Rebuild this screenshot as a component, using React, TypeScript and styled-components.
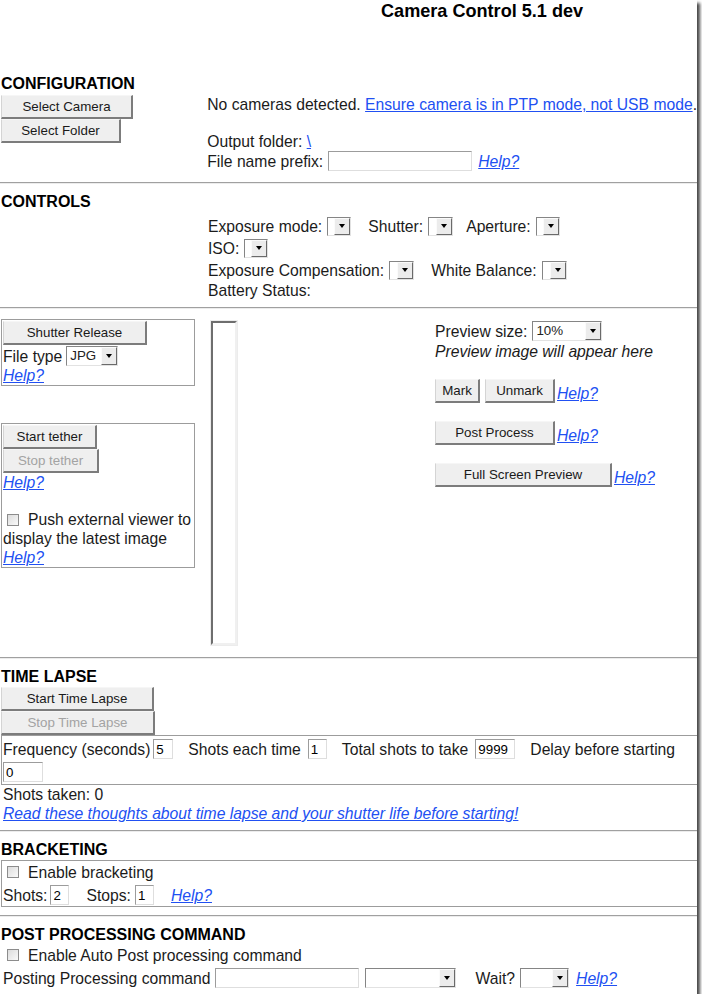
import React from 'react'
import styled, { createGlobalStyle } from 'styled-components'

const GlobalStyle = createGlobalStyle`
  html, body {
    margin: 0;
    padding: 0;
    background: #fff;
  }
  body {
    font-family: "Liberation Sans", Arial, sans-serif;
    font-size: 15.7px;
    line-height: 19px;
    color: #1b1b1b;
  }
`

const Page = styled.div`
  width: 697px;
  height: 994px;
  background: #fff;
  box-shadow: 3px 3px 3px rgba(0, 0, 0, 0.72);
  overflow: hidden;
  display: flex;
  flex-direction: column;
`

const Title = styled.h1`
  margin: 0;
  box-sizing: border-box;
  height: 74px;
  padding: 1px 0 0 381px;
  font-size: 18.1px;
  line-height: 21px;
  font-weight: bold;
  color: #000;
`

const Heading = styled.h2<{ $top?: number }>`
  margin: ${p => p.$top ?? 0}px 0 0 0;
  padding-left: 1px;
  font-size: 16px;
  line-height: 20px;
  font-weight: bold;
  color: #000;
`

const Rule = styled.hr<{ $top: number }>`
  margin: ${p => p.$top}px 0 0 0;
  height: 0;
  border: 0;
  border-top: 1px solid #a0a0a0;
  border-bottom: 1px solid #ececec;
`

const Button = styled.button<{ $w: number }>`
  width: ${p => p.$w}px;
  height: 24px;
  flex-shrink: 0;
  box-sizing: border-box;
  margin: 0;
  padding: 0;
  font-family: "Liberation Sans", Arial, sans-serif;
  font-size: 13.33px;
  color: #1a1a1a;
  background: #efefef;
  border-style: solid;
  border-width: 1px 2px 2px 1px;
  border-color: #f6f6f6 #7c7c7c #7c7c7c #d4d4d4;
  &:disabled {
    color: #a3a3a3;
  }
`

const Link = styled.a`
  color: #2150f2;
  text-decoration: underline;
`

const Help = styled(Link)`
  font-style: italic;
`

const TextBox = styled.input<{ $w: number }>`
  width: ${p => p.$w}px;
  height: 20px;
  flex-shrink: 0;
  box-sizing: border-box;
  margin: 0;
  padding: 0 2px;
  font-family: "Liberation Sans", Arial, sans-serif;
  font-size: 13.33px;
  color: #000;
  background: #fff;
  border: 1px solid;
  border-color: #9c9c9c #dedede #dedede #9c9c9c;
`

const ComboBox = styled.span<{ $w: number; $h: number }>`
  display: inline-flex;
  flex-shrink: 0;
  box-sizing: border-box;
  width: ${p => p.$w}px;
  height: ${p => p.$h}px;
  background: #fff;
  border: 1px solid;
  border-color: #858585 #e2e2e2 #e2e2e2 #858585;
  font-size: 13.33px;
  line-height: 17px;
`

const ComboValue = styled.span`
  flex: 1;
  padding-left: 3px;
  color: #222;
  overflow: hidden;
`

const ComboArrow = styled.span`
  width: 16px;
  box-sizing: border-box;
  background: #ececec;
  border: 1px solid;
  border-color: #fbfbfb #6a6a6a #6a6a6a #fbfbfb;
  display: flex;
  align-items: center;
  justify-content: center;
  &::after {
    content: '';
    border-left: 3.5px solid transparent;
    border-right: 3.5px solid transparent;
    border-top: 4px solid #000;
  }
`

function Combo({ w, h = 19, value }: { w: number; h?: number; value?: string }) {
  return (
    <ComboBox $w={w} $h={h}>
      <ComboValue>{value}</ComboValue>
      <ComboArrow />
    </ComboBox>
  )
}

const CheckBox = styled.span`
  display: inline-block;
  width: 12px;
  height: 12px;
  box-sizing: border-box;
  margin: 0 9px 0 4px;
  vertical-align: -1px;
  border: 1px solid #8c8c8c;
  background: linear-gradient(135deg, #dcdcdc, #fafafa);
`

/* configuration */

const ConfigRow = styled.div`
  display: flex;
  margin-top: 1px;
`

const ButtonStack = styled.div`
  width: 207px;
  padding-left: 1px;
  display: flex;
  flex-direction: column;
  align-items: flex-start;
`

const InfoColumn = styled.div`
  display: flex;
  flex-direction: column;
  white-space: nowrap;
`

const TextLine = styled.div<{ $top?: number }>`
  margin-top: ${p => p.$top ?? 0}px;
  height: 19px;
  white-space: nowrap;
`

const FieldLine = styled.div<{ $top?: number; $h?: number; $gap?: number }>`
  display: flex;
  align-items: center;
  gap: ${p => p.$gap ?? 5}px;
  margin-top: ${p => p.$top ?? 0}px;
  height: ${p => p.$h ?? 20}px;
  white-space: nowrap;
`

/* controls */

const ControlRow = styled.div<{ $top?: number; $h: number }>`
  display: flex;
  align-items: center;
  margin-top: ${p => p.$top ?? 0}px;
  height: ${p => p.$h}px;
  padding-left: 208px;
  white-space: nowrap;
`

const Field = styled.span<{ $gap?: number; $after?: number }>`
  display: inline-flex;
  align-items: center;
  gap: ${p => p.$gap ?? 5}px;
  margin-right: ${p => p.$after ?? 16}px;
`

/* shooting area */

const Workspace = styled.div`
  display: flex;
  align-items: flex-start;
`

const SideColumn = styled.div`
  width: 194px;
  margin-left: 1px;
  padding-top: 10px;
  display: flex;
  flex-direction: column;
  gap: 37px;
`

const Panel = styled.div`
  border: 1px solid #9c9c9c;
  padding: 1px 1px 0;
  display: flex;
  flex-direction: column;
  align-items: flex-start;
`

const WrapNote = styled.div<{ $top?: number }>`
  margin-top: ${p => p.$top ?? 0}px;
  line-height: 19px;
`

const ImageList = styled.div`
  margin: 12px 0 0 16px;
  width: 26px;
  height: 324px;
  box-sizing: border-box;
  border: 2px solid;
  border-color: #6e6e6e #f0f0f0 #f0f0f0 #6e6e6e;
  box-shadow: 0 0 0 1px #ececec;
`

const PreviewColumn = styled.div`
  margin: 12px 0 0 198px;
  display: flex;
  flex-direction: column;
  align-items: flex-start;
`

const Hint = styled.div`
  margin-top: 1px;
  height: 19px;
  font-style: italic;
  white-space: nowrap;
`

const ActionRow = styled.div<{ $top: number }>`
  display: flex;
  align-items: flex-end;
  gap: 5px;
  margin-top: ${p => p.$top}px;
  height: 24px;
  & > a {
    margin-left: -3px;
    line-height: 19px;
  }
`

/* time lapse & bracketing */

const StackedButtons = styled.div`
  display: flex;
  flex-direction: column;
  align-items: flex-start;
  padding-left: 1px;
`

const BorderBox = styled.div<{ $pad: string }>`
  margin-left: 1px;
  border: 1px solid #9c9c9c;
  border-right: 0;
  padding: ${p => p.$pad};
`

const Section = styled.div`
  padding-left: 3px;
`

export default function App() {
  return (
    <>
      <GlobalStyle />
      <Page>
        <Title>Camera Control 5.1 dev</Title>

        <Heading>CONFIGURATION</Heading>
        <ConfigRow>
          <ButtonStack>
            <Button $w={132}>Select Camera</Button>
            <Button $w={120}>Select Folder</Button>
          </ButtonStack>
          <InfoColumn>
            <TextLine>
              No cameras detected. <Link href="#">Ensure camera is in PTP mode, not USB mode</Link>.
            </TextLine>
            <TextLine $top={18}>
              Output folder: <Link href="#">\</Link>
            </TextLine>
            <FieldLine>
              <span>File name prefix:</span>
              <TextBox $w={144} defaultValue="" />
              <Help href="#" style={{ marginLeft: 1 }}>Help?</Help>
            </FieldLine>
          </InfoColumn>
        </ConfigRow>

        <Rule $top={11} />
        <Heading $top={8}>CONTROLS</Heading>
        <ControlRow $top={3} $h={22}>
          <Field $after={17}>Exposure mode: <Combo w={24} /></Field>
          <Field $after={13}>Shutter: <Combo w={25} /></Field>
          <Field>Aperture: <Combo w={24} /></Field>
        </ControlRow>
        <ControlRow $h={22}>
          <Field>ISO: <Combo w={24} /></Field>
        </ControlRow>
        <ControlRow $h={22}>
          <Field $after={17}>Exposure Compensation: <Combo w={25} /></Field>
          <Field>White Balance: <Combo w={25} /></Field>
        </ControlRow>
        <ControlRow $h={19}>Battery Status:</ControlRow>

        <Rule $top={7} />
        <Workspace>
          <SideColumn>
            <Panel>
              <Button $w={144}>Shutter Release</Button>
              <FieldLine $top={1} $gap={4}>
                <span>File type</span>
                <Combo w={52} h={20} value="JPG" />
              </FieldLine>
              <TextLine><Help href="#">Help?</Help></TextLine>
            </Panel>
            <Panel>
              <Button $w={94}>Start tether</Button>
              <Button $w={96} disabled>Stop tether</Button>
              <TextLine><Help href="#">Help?</Help></TextLine>
              <WrapNote $top={18}>
                <CheckBox />Push external viewer to display the latest image
              </WrapNote>
              <TextLine><Help href="#">Help?</Help></TextLine>
            </Panel>
          </SideColumn>

          <ImageList />

          <PreviewColumn>
            <FieldLine>
              <span>Preview size:</span>
              <Combo w={70} h={20} value="10%" />
            </FieldLine>
            <Hint>Preview image will appear here</Hint>
            <ActionRow $top={18}>
              <Button $w={45}>Mark</Button>
              <Button $w={70}>Unmark</Button>
              <Help href="#">Help?</Help>
            </ActionRow>
            <ActionRow $top={18}>
              <Button $w={120}>Post Process</Button>
              <Help href="#">Help?</Help>
            </ActionRow>
            <ActionRow $top={18}>
              <Button $w={177}>Full Screen Preview</Button>
              <Help href="#">Help?</Help>
            </ActionRow>
          </PreviewColumn>
        </Workspace>

        <Rule $top={12} />
        <Heading $top={8}>TIME LAPSE</Heading>
        <StackedButtons>
          <Button $w={153}>Start Time Lapse</Button>
          <Button $w={154} disabled>Stop Time Lapse</Button>
        </StackedButtons>
        <BorderBox $pad="3px 0 2px 1px">
          <FieldLine $gap={0}>
            <Field $gap={3} $after={15}>Frequency (seconds) <TextBox $w={20} defaultValue="5" /></Field>
            <Field $gap={7} $after={15}>Shots each time <TextBox $w={19} defaultValue="1" /></Field>
            <Field $gap={7} $after={15}>Total shots to take <TextBox $w={40} defaultValue="9999" /></Field>
            <span>Delay before starting</span>
          </FieldLine>
          <FieldLine $top={3}>
            <TextBox $w={40} defaultValue="0" />
          </FieldLine>
        </BorderBox>
        <Section>
          <TextLine>Shots taken: 0</TextLine>
          <TextLine>
            <Help href="#">Read these thoughts about time lapse and your shutter life before starting!</Help>
          </TextLine>
        </Section>

        <Rule $top={7} />
        <Heading $top={8}>BRACKETING</Heading>
        <BorderBox $pad="1px 0 1px 1px">
          <FieldLine $gap={0}>
            <CheckBox />Enable bracketing
          </FieldLine>
          <FieldLine $top={3} $gap={0}>
            <Field $gap={3} $after={17}>Shots: <TextBox $w={19} defaultValue="2" /></Field>
            <Field $gap={4} $after={17}>Stops: <TextBox $w={19} defaultValue="1" /></Field>
            <Help href="#">Help?</Help>
          </FieldLine>
        </BorderBox>

        <Rule $top={8} />
        <Heading $top={8}>POST PROCESSING COMMAND</Heading>
        <Section>
          <FieldLine $gap={0}>
            <CheckBox />Enable Auto Post processing command
          </FieldLine>
          <FieldLine $top={3} $gap={0}>
            <Field $gap={4} $after={6}>Posting Processing command <TextBox $w={144} defaultValue="" /></Field>
            <Field $after={20}><Combo w={91} h={20} /></Field>
            <Field $gap={5} $after={7}>Wait? <Combo w={49} h={20} /></Field>
            <Help href="#">Help?</Help>
          </FieldLine>
        </Section>
      </Page>
    </>
  )
}
